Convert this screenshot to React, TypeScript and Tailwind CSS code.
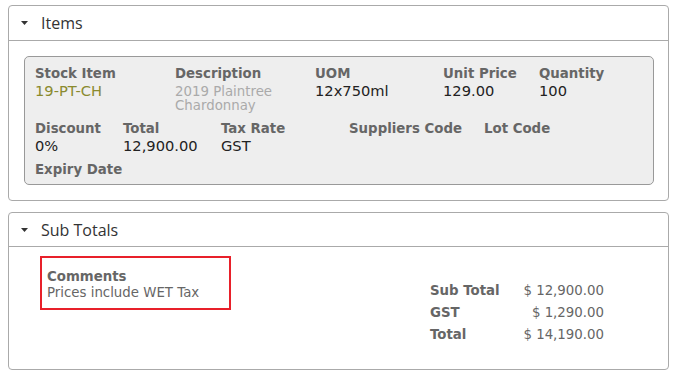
import React from "react";

type Field = {
  label: string;
  value?: string;
  width: string;
  tone?: "olive" | "muted" | "normal";
};

// Two rows of line-item details inside the grey box
const ROW_ONE: Field[] = [
  { label: "Stock Item", value: "19-PT-CH", width: "w-[140px]", tone: "olive" },
  { label: "Description", value: "2019 Plaintree Chardonnay", width: "w-[140px]", tone: "muted" },
  { label: "UOM", value: "12x750ml", width: "w-[128px]" },
  { label: "Unit Price", value: "129.00", width: "w-[96px]" },
  { label: "Quantity", value: "100", width: "w-[90px]" },
];

const ROW_TWO: Field[] = [
  { label: "Discount", value: "0%", width: "w-[88px]" },
  { label: "Total", value: "12,900.00", width: "w-[98px]" },
  { label: "Tax Rate", value: "GST", width: "w-[128px]" },
  { label: "Suppliers Code", width: "w-[135px]" },
  { label: "Lot Code", width: "w-[120px]" },
];

const TOTALS = [
  { label: "Sub Total", value: "$ 12,900.00" },
  { label: "GST", value: "$ 1,290.00" },
  { label: "Total", value: "$ 14,190.00" },
];

function Caret() {
  return (
    <svg width="7" height="4" viewBox="0 0 7 4" className="shrink-0">
      <path d="M0 0 L7 0 L3.5 4 Z" fill="#333" />
    </svg>
  );
}

function PanelHeader({ title, height }: { title: string; height: string }) {
  return (
    <div className={`${height} border-b border-[#aaa] flex items-center pl-[12px]`}>
      <Caret />
      <span className="ml-[13px] text-[16px] text-[#333] font-['Open_Sans',sans-serif]">
        {title}
      </span>
    </div>
  );
}

function FieldCell({ label, value, width, tone = "normal" }: Field) {
  return (
    <div className={`${width} shrink-0`}>
      <div className="text-[13.33px] leading-4 font-bold text-[#666]">{label}</div>
      {value && tone === "muted" && (
        <div className="pt-[3px] pr-[10px] text-[13.33px] leading-[14px] text-[#aaa]">
          {value}
        </div>
      )}
      {value && tone !== "muted" && (
        <div
          className={`text-[14.67px] leading-[18px] ${
            tone === "olive" ? "text-[#8a8a2e]" : "text-[#222]"
          }`}
        >
          {value}
        </div>
      )}
    </div>
  );
}

export default function App() {
  return (
    <div className="w-[678px] h-[378px] bg-white pt-[5px] pl-2 pr-[9px] font-['DejaVu_Sans',Verdana,sans-serif]">
      {/* Items */}
      <div className="border border-[#aaa] rounded-[4px]">
        <PanelHeader title="Items" height="h-[35px]" />
        <div className="pt-[15px] pl-[15px] pr-[14px] pb-[15px]">
          <div className="border border-[#999] rounded-[5px] bg-[#eee] pt-[9px] pl-[10px] pb-[6px]">
            <div className="flex">
              {ROW_ONE.map((f) => (
                <FieldCell key={f.label} {...f} />
              ))}
            </div>
            <div className="flex mt-[8px]">
              {ROW_TWO.map((f) => (
                <FieldCell key={f.label} {...f} />
              ))}
            </div>
            <div className="mt-[7px]">
              <div className="text-[13.33px] leading-4 font-bold text-[#666]">Expiry Date</div>
            </div>
          </div>
        </div>
      </div>

      {/* Sub Totals */}
      <div className="mt-[11px] border border-[#aaa] rounded-[4px]">
        <PanelHeader title="Sub Totals" height="h-[34px]" />
        <div className="flex justify-between pt-[9px] pl-[31px] pr-[64px] pb-[23px]">
          <div className="w-[191px] h-[54px] border-2 border-[#e8202a] pt-[11px] pl-[5px]">
            <div className="text-[13.33px] leading-4 font-bold text-[#666]">Comments</div>
            <div className="text-[13.33px] leading-4 text-[#666]">Prices include WET Tax</div>
          </div>
          <div className="mt-[24px]">
            {TOTALS.map((t) => (
              <div key={t.label} className="flex text-[13.33px] leading-[22px] text-[#666]">
                <span className="w-[93px] font-bold">{t.label}</span>
                <span className="w-[81px] text-right">{t.value}</span>
              </div>
            ))}
          </div>
        </div>
      </div>
    </div>
  );
}
